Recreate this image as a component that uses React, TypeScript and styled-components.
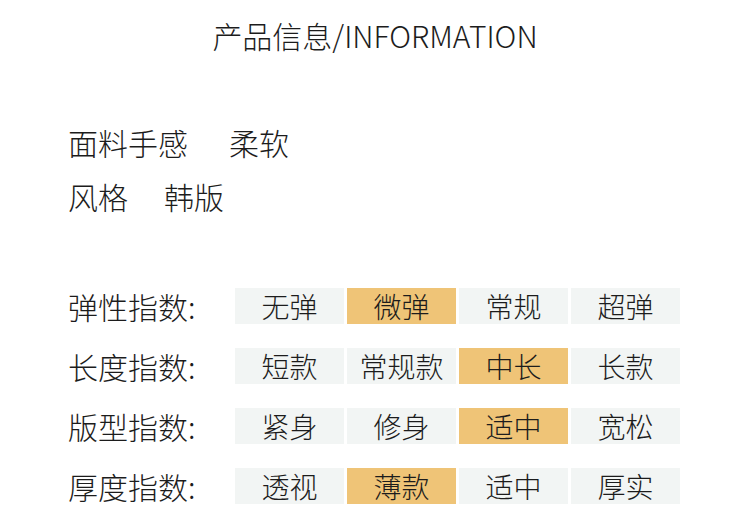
import React from "react";
import styled, {createGlobalStyle} from "styled-components";

const GlobalStyle = createGlobalStyle`
    body {
        margin: 0;
        background: #ffffff;
        font-family: "Noto Sans CJK SC", "Noto Sans", sans-serif;
        font-weight: 300;
        color: #1c1c1c;
    }
`;

const Page = styled.div`
    width: 750px;
    height: 532px;
    padding-top: 13px;
    box-sizing: border-box;
    overflow: hidden;
`;

const Title = styled.h1`
    margin: 0;
    font-size: 30px;
    font-weight: 300;
    line-height: 44px;
    text-align: center;
`;

const Specs = styled.div`
    margin-top: 58px;
    padding-left: 68px;
`;

const SpecLine = styled.div`
    display: flex;
    font-size: 30px;
    line-height: 54px;
`;

const SpecValue = styled.span<{ $gap: number }>`
    margin-left: ${p => p.$gap}px;
`;

const Table = styled.div`
    margin-top: 65px;
    padding-left: 68px;
    display: flex;
    flex-direction: column;
    gap: 24px;
`;

const Row = styled.div`
    display: flex;
    align-items: center;
    height: 36px;
`;

const Label = styled.div`
    width: 167px;
    font-size: 30px;
    line-height: 36px;
`;

const Cells = styled.div`
    display: grid;
    grid-template-columns: repeat(4, 109px);
    gap: 3px;
`;

const Cell = styled.div<{ $active?: boolean }>`
    height: 36px;
    line-height: 36px;
    text-align: center;
    font-size: 28px;
    background: ${p => p.$active ? "#efc477" : "#f2f5f4"};
`;

const specs = [
    {label: "面料手感", value: "柔软", gap: 41},
    {label: "风格", value: "韩版", gap: 36},
];

const rows = [
    {label: "弹性指数:", options: ["无弹", "微弹", "常规", "超弹"], active: 1},
    {label: "长度指数:", options: ["短款", "常规款", "中长", "长款"], active: 2},
    {label: "版型指数:", options: ["紧身", "修身", "适中", "宽松"], active: 2},
    {label: "厚度指数:", options: ["透视", "薄款", "适中", "厚实"], active: 1},
];

function App() {
    return (
        <Page>
            <GlobalStyle/>
            <Title>产品信息/INFORMATION</Title>
            <Specs>
                {specs.map(s => (
                    <SpecLine key={s.label}>
                        <span>{s.label}</span>
                        <SpecValue $gap={s.gap}>{s.value}</SpecValue>
                    </SpecLine>
                ))}
            </Specs>
            <Table>
                {rows.map(r => (
                    <Row key={r.label}>
                        <Label>{r.label}</Label>
                        <Cells>
                            {r.options.map((o, i) => (
                                <Cell key={o + i} $active={i === r.active}>{o}</Cell>
                            ))}
                        </Cells>
                    </Row>
                ))}
            </Table>
        </Page>
    );
}

export default App;
